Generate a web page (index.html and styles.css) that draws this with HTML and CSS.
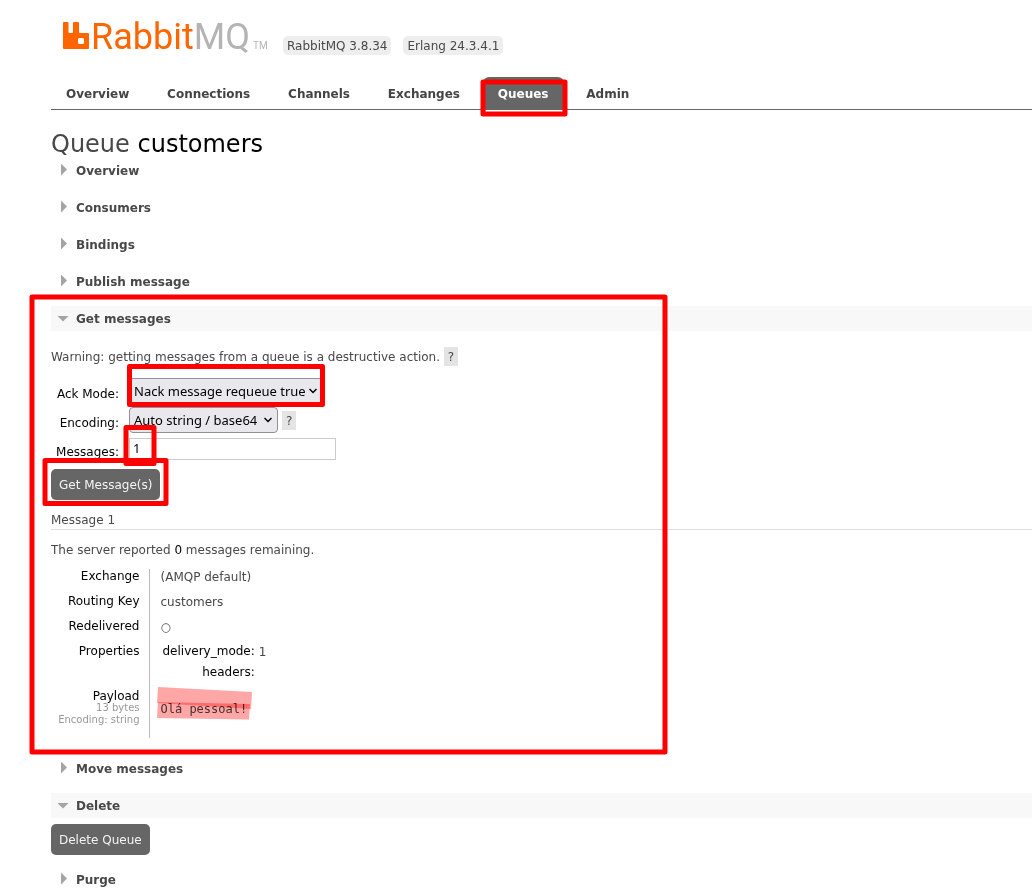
FILE: index.html
```html
<!DOCTYPE html>
<html lang="en">
<head>
<meta charset="utf-8">
<title>RabbitMQ Management</title>
<link rel="stylesheet" href="styles.css">
</head>
<body>
<div class="page">
  <header class="header">
    <div class="brand">
      <a class="logo" href="#">
        <svg class="logo-mark" viewBox="0 0 26 27" width="26" height="27" aria-hidden="true"><path fill="#f60" fill-rule="evenodd" d="M1 0H4.500Q5.500 0 5.500 1V10Q5.500 11 6.500 11H9Q10 11 10 10V1Q10 0 11 0H15Q16 0 16 1V10Q16 11 17 11H25Q26 11 26 12V26Q26 27 25 27H1Q0 27 0 26V1Q0 0 1 0ZM16.500 16Q15 16 15 17.500V20.500Q15 22 16.500 22H19.500Q21 22 21 20.500V17.500Q21 16 19.500 16Z"/></svg>
        <span class="logo-text">Rabbit<span class="logo-mq">MQ</span></span>
        <span class="logo-tm">TM</span>
      </a>
      <ul class="versions"><li>RabbitMQ 3.8.34</li><li>Erlang 24.3.4.1</li></ul>
    </div>
    <nav class="tabs">
      <a href="#">Overview</a>
      <a href="#">Connections</a>
      <a href="#">Channels</a>
      <a href="#">Exchanges</a>
      <a href="#" class="selected">Queues</a>
      <a href="#">Admin</a>
    </nav>
  </header>
  <main class="main">
    <h1>Queue <b>customers</b></h1>
    <section><h2>Overview</h2></section>
    <section><h2>Consumers</h2></section>
    <section><h2>Bindings</h2></section>
    <section><h2>Publish message</h2></section>
    <section>
      <h2 class="open">Get messages</h2>
      <p class="warning">Warning: getting messages from a queue is a destructive action. <button type="button" class="help">?</button></p>
      <form class="get-form">
        <label for="ack">Ack Mode:</label>
        <div class="field">
          <span class="select"><select id="ack"><option>Nack message requeue true</option></select><svg viewBox="0 0 8 6" width="8" height="6"><path d="M.5 1L4 4.500 7.500 1"/></svg></span>
        </div>
        <label for="encoding">Encoding:</label>
        <div class="field">
          <span class="select short"><select id="encoding"><option>Auto string / base64</option></select><svg viewBox="0 0 8 6" width="8" height="6"><path d="M.5 1L4 4.500 7.500 1"/></svg></span>
          <button type="button" class="help">?</button>
        </div>
        <label for="count">Messages:</label>
        <div class="field"><input id="count" type="text" value="1"></div>
        <button type="button" class="action">Get Message(s)</button>
      </form>
      <h3>Message 1</h3>
      <p class="remaining">The server reported <b>0</b> messages remaining.</p>
      <table class="facts">
        <tr><th scope="row">Exchange</th><td>(AMQP default)</td></tr>
        <tr><th scope="row">Routing Key</th><td>customers</td></tr>
        <tr><th scope="row">Redelivered</th><td>○</td></tr>
        <tr class="properties"><th scope="row">Properties</th><td>
          <table class="mini">
            <tr><th scope="row">delivery_mode:</th><td>1</td></tr>
            <tr><th scope="row">headers:</th><td></td></tr>
          </table>
        </td></tr>
        <tr class="payload"><th scope="row">Payload<small>13 bytes</small><small>Encoding: string</small></th><td><pre>Olá pessoal!</pre></td></tr>
      </table>
    </section>
    <section><h2>Move messages</h2></section>
    <section>
      <h2 class="open">Delete</h2>
      <button type="button" class="action">Delete Queue</button>
    </section>
    <section><h2>Purge</h2></section>
  </main>
  <svg class="marks" width="700" height="780" viewBox="0 0 700 780" aria-hidden="true">
    <g fill="none" stroke="#f00" stroke-width="5" stroke-linejoin="round">
      <rect x="483" y="82" width="82" height="32"/>
      <rect x="32" y="297" width="633" height="455"/>
      <rect x="129.500" y="366.500" width="193" height="38"/>
      <rect x="126" y="427.500" width="28" height="36"/>
      <rect x="45" y="460.500" width="121" height="43"/>
    </g>
  </svg>
  <svg class="marks highlight" width="700" height="780" viewBox="0 0 700 780" aria-hidden="true">
    <g fill="#f00" fill-opacity=".35">
      <path d="M158 687l94 5-1 17-94-6z"/>
      <path d="M158 702l92 2-1 15.500-92-1.500z"/>
    </g>
  </svg>
</div>
</body>
</html>
```
FILE: styles.css
```css
* { box-sizing: border-box; }
body { margin: 0; background: #fff; color: #484848; font: 12px/15px "DejaVu Sans", Verdana, sans-serif; }
.page { position: relative; background: #fff; }
h1, h2, h3, p, ul, pre { margin: 0; }
a { color: inherit; text-decoration: none; }
b { color: #000; font-weight: normal; }

.header { margin-left: 51px; border-bottom: 1px solid #666; }
.brand { display: flex; align-items: flex-end; height: 77px; padding: 0 0 22px 12px; }
.logo { display: flex; align-items: flex-end; width: 220px; padding-bottom: 6px; }
.logo-mark { display: block; margin-right: 2px; }
.logo-text { height: 27px; color: #f60; font: 400 36px/30px Roboto, sans-serif; }
.logo-mq { color: #b4b4b4; }
.logo-tm { margin-left: 3px; color: #b4b4b4; font: 10px/6px Roboto, sans-serif; }
.versions { display: flex; gap: 12px; padding: 0; list-style: none; }
.versions li { padding: 3px 4px 1px; border-radius: 5px; background: #eee; }

.tabs { white-space: nowrap; }
.tabs a { display: inline-block; margin-right: 4px; padding: 10px 15px 7px; border-radius: 6px 6px 0 0; font-weight: bold; color: #444; vertical-align: top; }
.tabs .selected { background: #666; color: #fff; }

.main { margin-left: 51px; padding-top: 20px; }
h1 { color: #484848; font-size: 24px; font-weight: normal; line-height: 28px; }
section { margin-bottom: 12px; }
section:last-child { margin-bottom: 0; }
h2 { display: flex; align-items: center; height: 25px; padding-top: 2px; font-size: 12px; color: #484848; }
h2::before { content: ""; width: 6px; height: 12px; margin: 0 9px 4px 10px; background: #a4a4a4; clip-path: polygon(0 0, 100% 50%, 0 100%); }
h2.open { background: #f8f8f8; }
h2.open::before { width: 12px; height: 6px; margin: 0 7px 2px 6px; clip-path: polygon(0 0, 100% 0, 50% 100%); }

.help { padding: 3px 4px 1px; border: 0; background: #e4e4e4; color: #484848; font: 12px/15px "DejaVu Sans", sans-serif; }
.warning { padding: 16px 0 12px; }
.get-form { display: grid; grid-template-columns: 68px 1fr; column-gap: 10px; row-gap: 3px; }
.get-form label { padding-top: 9px; text-align: right; color: #000; }
.field { display: flex; align-items: center; gap: 4px; height: 26px; }
.select { position: relative; width: 194px; height: 26px; }
.select.short { width: 149px; }
.select select, .field input { color: #000; font: 13px/18px "Noto Sans", sans-serif; }
.select select { width: 100%; height: 100%; padding: 0 4px; border: 1px solid #8f8f9d; border-radius: 4px; background: #e9e9ed; appearance: none; }
.select svg { position: absolute; top: 10px; right: 6px; fill: none; stroke: #000; stroke-width: 1.5; pointer-events: none; }
.field input { width: 207px; height: 22px; padding: 0 3px 2px; border: 1px solid #ccc; background: #fff; }
.action { padding: 9px 8px 7px; border: 0; border-radius: 5px; background: #666; color: #f4f4f4; font: 12px/15px "DejaVu Sans", sans-serif; }
.get-form .action { grid-column: 1 / -1; justify-self: start; margin-top: 4px; }
h2 + .action { display: block; margin-top: 6px; }
h3 { margin-top: 13px; padding-bottom: 1px; border-bottom: 1px solid #ddd; font-size: 12px; font-weight: normal; }
.remaining { padding: 13px 0 11px; }

.facts, .mini { border-collapse: collapse; }
.facts { margin-bottom: 18px; }
.facts th, .facts td { height: 25px; padding: 0; vertical-align: top; font-weight: normal; }
.facts th { width: 98px; padding-right: 9px; border-right: 1px solid #bbb; text-align: right; color: #000; }
.facts td { padding: 1px 0 0 11px; }
.facts .properties { height: 44px; }
.facts .properties > td { padding-top: 0; }
.facts .mini th { width: auto; height: 21px; padding: 0 4px 0 2px; border: 0; }
.facts .mini td { height: 21px; padding: 1px 0 0; }
.facts .payload { height: 50px; }
.facts .payload th { padding-top: 3px; line-height: 11px; }
.facts .payload td { padding-top: 14px; }
.facts small { display: block; color: #999; font-size: 10px; line-height: 12px; }
.facts pre { font: 12px/15px "DejaVu Sans Mono", monospace; }

.marks { position: absolute; top: 0; left: 0; pointer-events: none; }
.highlight { mix-blend-mode: multiply; }
```
